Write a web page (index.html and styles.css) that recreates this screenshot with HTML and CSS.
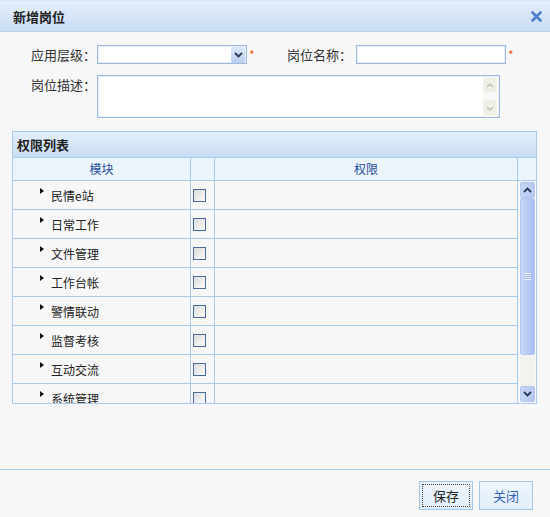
FILE: index.html
```html
<!DOCTYPE html>
<html>
<head>
<meta charset="utf-8">
<link rel="stylesheet" href="styles.css">
</head>
<body>
<div class="titlebar">
  <span class="title">新增岗位</span>
  <svg class="close" width="11" height="11" viewBox="0 0 11 11"><path d="M1.5 1.5 L9.5 9.5 M9.5 1.5 L1.5 9.5" stroke="#4f7fc6" stroke-width="2.6" stroke-linecap="round"/></svg>
</div>
<div class="main">
  <div class="form">
    <div class="row">
      <label class="lbl lbl1">应用层级：</label>
      <div class="select">
        <span class="dd"><svg width="9" height="6" viewBox="0 0 9 6"><path d="M1 1 L4.5 4.5 L8 1" fill="none" stroke="#2b3a55" stroke-width="1.8"/></svg></span>
      </div>
      <span class="star">*</span>
      <label class="lbl lbl2">岗位名称：</label>
      <div class="input"></div>
      <span class="star">*</span>
    </div>
    <div class="row row2">
      <label class="lbl lbl1 top">岗位描述：</label>
      <div class="textarea">
        <div class="tscroll">
          <span class="tbtn"><svg width="8" height="5" viewBox="0 0 8 5"><path d="M1 4 L4 1 L7 4" fill="none" stroke="#b9b9b0" stroke-width="1.2"/></svg></span>
          <span class="tbtn"><svg width="8" height="5" viewBox="0 0 8 5"><path d="M1 1 L4 4 L7 1" fill="none" stroke="#b9b9b0" stroke-width="1.2"/></svg></span>
        </div>
      </div>
    </div>
  </div>
  <div class="panel">
    <div class="phead">权限列表</div>
    <div class="colhead">
      <div class="c-mod">模块</div>
      <div class="c-chk"></div>
      <div class="c-perm">权限</div>
      <div class="c-sc"></div>
    </div>
    <div class="pbody">
      <div class="rows">
        <div class="trow"><div class="c-mod"><i class="tri"></i>民情e站</div><div class="c-chk"><span class="cb"></span></div><div class="c-perm"></div></div>
        <div class="trow"><div class="c-mod"><i class="tri"></i>日常工作</div><div class="c-chk"><span class="cb"></span></div><div class="c-perm"></div></div>
        <div class="trow"><div class="c-mod"><i class="tri"></i>文件管理</div><div class="c-chk"><span class="cb"></span></div><div class="c-perm"></div></div>
        <div class="trow"><div class="c-mod"><i class="tri"></i>工作台帐</div><div class="c-chk"><span class="cb"></span></div><div class="c-perm"></div></div>
        <div class="trow"><div class="c-mod"><i class="tri"></i>警情联动</div><div class="c-chk"><span class="cb"></span></div><div class="c-perm"></div></div>
        <div class="trow"><div class="c-mod"><i class="tri"></i>监督考核</div><div class="c-chk"><span class="cb"></span></div><div class="c-perm"></div></div>
        <div class="trow"><div class="c-mod"><i class="tri"></i>互动交流</div><div class="c-chk"><span class="cb"></span></div><div class="c-perm"></div></div>
        <div class="trow"><div class="c-mod"><i class="tri"></i>系统管理</div><div class="c-chk"><span class="cb"></span></div><div class="c-perm"></div></div>
      </div>
      <div class="scroll">
        <span class="sbtn"><svg width="9" height="6" viewBox="0 0 9 6"><path d="M1 5 L4.5 1.5 L8 5" fill="none" stroke="#2b3a55" stroke-width="1.8"/></svg></span>
        <span class="thumb"><span class="grip"></span></span>
        <span class="track"></span>
        <span class="sbtn"><svg width="9" height="6" viewBox="0 0 9 6"><path d="M1 1 L4.5 4.5 L8 1" fill="none" stroke="#2b3a55" stroke-width="1.8"/></svg></span>
      </div>
    </div>
  </div>
</div>
<div class="footer">
  <button class="btn save">保存</button>
  <button class="btn closebtn">关闭</button>
</div>
</body>
</html>
```
FILE: styles.css
```css
* { box-sizing: border-box; }
html, body { margin: 0; padding: 0; }
body {
  width: 550px;
  height: 517px;
  overflow: hidden;
  background: #f7f7f7;
  font-family: "Noto Sans CJK SC", sans-serif;
  font-size: 12px;
  color: #333;
  display: flex;
  flex-direction: column;
}
.titlebar {
  height: 32px;
  flex: none;
  border-top: 1px solid #d6e6f6;
  border-bottom: 1px solid #b7d0ea;
  background: linear-gradient(#e4eefa, #c8dcf3);
  display: flex;
  align-items: center;
  justify-content: space-between;
  padding: 0 8px 0 13px;
}
.title { font-weight: bold; font-size: 13px; color: #222; }
.main { flex: 1; }
.form { padding-top: 13px; }
.row { display: flex; align-items: center; height: 19px; }
.row2 { margin-top: 11px; height: 43px; align-items: flex-start; }
.lbl { font-size: 13px; color: #333; text-align: right; line-height: 19px; }
.lbl1 { width: 97px; padding-right: 1px; }
.lbl2 { width: 99px; padding-right: 4px; }
.top { padding-top: 0; }
.select, .input {
  width: 150px;
  height: 19px;
  border: 1px solid #9db9dc;
  background: #fff;
  box-shadow: inset 0 0 0 1px #e6eef8;
  display: flex;
  justify-content: flex-end;
  align-items: center;
  padding-right: 1px;
}
.dd {
  width: 14px;
  height: 16px;
  background: linear-gradient(#dbe7f8, #b9cdee);
  border-radius: 2px;
  display: flex;
  align-items: center;
  justify-content: center;
}
.star { width: 10px; color: #f05a1c; font-size: 12px; padding-left: 2px; line-height: 19px; }
.textarea {
  width: 403px;
  height: 43px;
  border: 1px solid #9db9dc;
  background: #fff;
  box-shadow: inset 0 0 0 1px #e6eef8;
  display: flex;
  justify-content: flex-end;
  padding: 1px 2px 0 0;
}
.tscroll {
  width: 14px;
  display: flex;
  flex-direction: column;
  justify-content: space-between;
  padding-bottom: 1px;
  background: #f8f8f6;
}
.tbtn {
  height: 16px;
  background: #efefe8;
  border: 1px solid #f4f4ee;
  display: flex;
  align-items: center;
  justify-content: center;
}
.panel {
  margin: 13px 0 0 12px;
  width: 525px;
  border: 1px solid #a9cbea;
}
.phead {
  height: 26px;
  border-bottom: 1px solid #a9cbea;
  background: linear-gradient(#e3eefa, #c9def4);
  font-weight: bold;
  font-size: 13px;
  color: #222;
  padding-left: 4px;
  line-height: 26px;
}
.colhead {
  display: flex;
  height: 23px;
  border-bottom: 1px solid #a9cbea;
  background: #ebf3fb;
  color: #2a4d9e;
  font-size: 12px;
}
.colhead > div { line-height: 21px; text-align: center; }
.c-mod { width: 178px; border-right: 1px solid #a9cbea; flex: none; }
.c-chk { width: 24px; border-right: 1px solid #a9cbea; flex: none; }
.c-perm { width: 303px; border-right: 1px solid #a9cbea; flex: none; }
.c-sc { width: 18px; flex: none; }
.pbody { display: flex; height: 222px; }
.rows { width: 505px; height: 222px; overflow: hidden; }
.trow { display: flex; height: 29px; border-bottom: 1px solid #a9cbea; }
.trow .c-mod { display: flex; align-items: center; padding-left: 27px; font-size: 12px; color: #222; }
.tri {
  width: 0; height: 0;
  border-top: 3.5px solid transparent;
  border-bottom: 3.5px solid transparent;
  border-left: 4px solid #111;
  margin-right: 7px;
  margin-top: -8px;
}
.trow .c-chk { padding: 8px 0 0 2px; }
.cb {
  display: block;
  width: 13px;
  height: 13px;
  border: 1px solid #4b6b98;
  background: linear-gradient(135deg, #dcdcdc, #fbfbfb);
}
.scroll {
  width: 18px;
  display: flex;
  flex-direction: column;
  padding: 1px 1px 1px 2px;
}
.sbtn {
  height: 16px;
  flex: none;
  background: linear-gradient(90deg, #c6d5f7, #b5c8f2);
  border: 1px solid #b6c6ec;
  border-radius: 2px;
  display: flex;
  align-items: center;
  justify-content: center;
}
.thumb {
  height: 157px;
  flex: none;
  background: linear-gradient(90deg, #c9d7f8, #a9bdf0);
  border: 1px solid #b4c5ee;
  border-radius: 2px;
  display: flex;
  align-items: center;
  justify-content: center;
}
.grip {
  width: 7px;
  height: 7px;
  background: repeating-linear-gradient(#eef2fd 0 1px, #9fb3e6 1px 2px);
}
.track { flex: 1; background: #f2f2ef; }
.footer {
  height: 48px;
  flex: none;
  border-top: 1px solid #a9cbea;
  display: flex;
  justify-content: flex-end;
  align-items: flex-start;
  padding: 11px 17px 0 0;
  gap: 6px;
}
.btn {
  height: 29px;
  border: 1px solid #a6c6e6;
  background: linear-gradient(#eef5fc, #e2eefa);
  font-family: "Noto Sans CJK SC", sans-serif;
  font-size: 13px;
  padding: 0;
  cursor: pointer;
}
.save { width: 54px; color: #222; outline: 1px dotted #444; outline-offset: -4px; }
.closebtn { width: 54px; color: #3563b3; }
```
